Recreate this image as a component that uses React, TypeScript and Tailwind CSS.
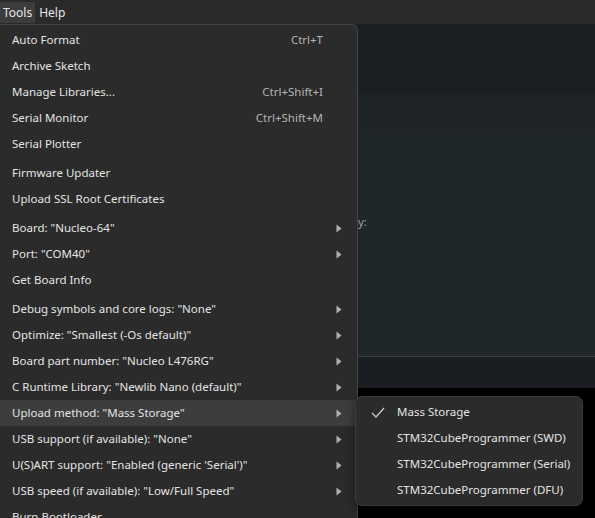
import React from "react";

type Item = { label: string; shortcut?: string; sub?: boolean; active?: boolean } | "sep";

const items: Item[] = [
  { label: "Auto Format", shortcut: "Ctrl+T" },
  { label: "Archive Sketch" },
  { label: "Manage Libraries...", shortcut: "Ctrl+Shift+I" },
  { label: "Serial Monitor", shortcut: "Ctrl+Shift+M" },
  { label: "Serial Plotter" },
  "sep",
  { label: "Firmware Updater" },
  { label: "Upload SSL Root Certificates" },
  "sep",
  { label: 'Board: "Nucleo-64"', sub: true },
  { label: 'Port: "COM40"', sub: true },
  { label: "Get Board Info" },
  "sep",
  { label: 'Debug symbols and core logs: "None"', sub: true },
  { label: 'Optimize: "Smallest (-Os default)"', sub: true },
  { label: 'Board part number: "Nucleo L476RG"', sub: true },
  { label: 'C Runtime Library: "Newlib Nano (default)"', sub: true },
  { label: 'Upload method: "Mass Storage"', sub: true, active: true },
  { label: 'USB support (if available): "None"', sub: true },
  { label: 'U(S)ART support: "Enabled (generic \'Serial\')"', sub: true },
  { label: 'USB speed (if available): "Low/Full Speed"', sub: true },
  { label: "Burn Bootloader" },
];

const subItems = [
  { label: "Mass Storage", checked: true },
  { label: "STM32CubeProgrammer (SWD)" },
  { label: "STM32CubeProgrammer (Serial)" },
  { label: "STM32CubeProgrammer (DFU)" },
];

function Arrow() {
  return (
    <svg width="6" height="9" viewBox="0 0 6 9" className="shrink-0">
      <path d="M0.5 0.5 L5.5 4.5 L0.5 8.5 Z" fill="#b0b0b0" />
    </svg>
  );
}

export default function App() {
  return (
    <div
      className="w-[595px] h-[518px] overflow-hidden bg-black flex flex-col text-[11.5px] text-[#e4e4e4] relative"
      style={{ fontFamily: '"Noto Sans", "Open Sans", sans-serif' }}
    >
      {/* menubar */}
      <div className="h-[24px] shrink-0 bg-[#2a2a2a] flex items-stretch pt-[2px] pb-[1px] text-[12px]">
        <div className="px-[3px] flex items-center bg-[#3c3c3c] text-[#e8e8e8]">Tools</div>
        <div className="px-[4px] flex items-center text-[#e8e8e8]">Help</div>
      </div>
      {/* background app */}
      <div className="h-[71px] bg-[#1b1f21] shrink-0" />
      <div className="h-[40px] bg-[#1f2427] shrink-0" />
      <div className="h-[221px] bg-[#202729] shrink-0 relative">
        <span className="absolute left-[358px] top-[78px] text-[#9aa0a4]">y:</span>
      </div>
      <div className="h-[1px] bg-[#3b4043] shrink-0" />
      <div className="h-[31px] bg-[#1a1d22] shrink-0" />
      <div className="flex-1 bg-black" />

      {/* main menu */}
      <div className="absolute left-0 top-[24px] w-[358px] h-[500px] bg-[#2b2b2b] border-r border-t border-[#454545] rounded-tr-[7px] pt-[2px]">
        {items.map((it, i) =>
          it === "sep" ? (
            <div key={i} className="h-[3px]" />
          ) : (
            <div
              key={i}
              className={`h-[26px] flex items-center pl-[12px] pr-[13px] mr-[2px] ${it.active ? "bg-[#3d3d3d]" : ""}`}
            >
              <span className="flex-1 whitespace-nowrap">{it.label}</span>
              {it.shortcut && <span className="text-[#b4b4b4] mr-[19px]">{it.shortcut}</span>}
              {it.sub && <Arrow />}
            </div>
          )
        )}
      </div>

      {/* submenu */}
      <div className="absolute left-[355px] top-[396px] w-[228px] h-[110px] bg-[#2b2b2b] border border-[#3c3c3c] rounded-[7px] pt-[2px] shadow-[0_4px_10px_rgba(0,0,0,0.5)]">
        {subItems.map((s, i) => (
          <div key={i} className="h-[26px] flex items-center">
            <span className="w-[41px] shrink-0 flex justify-center pl-[3px]">
              {s.checked && (
                <svg width="14" height="11" viewBox="0 0 14 11">
                  <path d="M1 6 L5 10 L13 1" fill="none" stroke="#c8c8c8" strokeWidth="1.3" />
                </svg>
              )}
            </span>
            <span className="whitespace-nowrap">{s.label}</span>
          </div>
        ))}
      </div>
    </div>
  );
}
